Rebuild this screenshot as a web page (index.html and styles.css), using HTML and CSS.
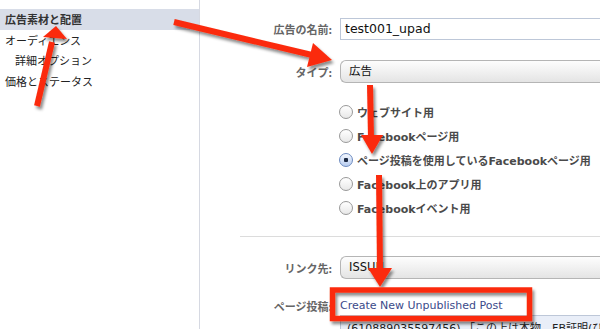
FILE: index.html
```html
<!DOCTYPE html>
<html>
<head>
    <title>広告の作成</title>
    <link rel="stylesheet" href="styles.css">
</head>
<body>
    <div class="page">
        <div class="sidebar">
            <div class="nav-item active">広告素材と配置</div>
            <div class="nav-item">オーディエンス</div>
            <div class="nav-item sub">詳細オプション</div>
            <div class="nav-item">価格とステータス</div>
        </div>
        <div class="main">
            <div class="row">
                <div class="label">広告の名前:</div>
                <div class="field"><div class="input">test001_upad</div></div>
            </div>
            <div class="row row-type">
                <div class="label">タイプ:</div>
                <div class="field"><div class="select">広告</div></div>
            </div>
            <div class="radios">
                <div class="radio-item"><span class="radio"></span>ウェブサイト用</div>
                <div class="radio-item"><span class="radio"></span>Facebookページ用</div>
                <div class="radio-item"><span class="radio checked"></span>ページ投稿を使用しているFacebookページ用</div>
                <div class="radio-item"><span class="radio"></span>Facebook上のアプリ用</div>
                <div class="radio-item"><span class="radio"></span>Facebookイベント用</div>
            </div>
            <div class="divider"></div>
            <div class="row row-link">
                <div class="label">リンク先:</div>
                <div class="field"><div class="select">ISSUN</div></div>
            </div>
            <div class="row row-post">
                <div class="label">ページ投稿:</div>
                <div class="field"><a class="post-link" href="#">Create New Unpublished Post</a></div>
            </div>
            <div class="post-box">(610889035597456) 「この上は本物。FB証明(ぴ</div>
        </div>
    </div>

    <!-- annotation layer -->
    <svg class="notes" width="600" height="329" viewBox="0 0 600 329">
        <defs>
            <filter id="shadow" x="-20%" y="-20%" width="140%" height="140%">
                <feDropShadow dx="2" dy="3" stdDeviation="1.8" flood-color="#000" flood-opacity="0.45"/>
            </filter>
        </defs>
        <g filter="url(#shadow)" fill="#fb2c0c" stroke="#fb2c0c">
            <line x1="174" y1="22" x2="312" y2="55" stroke-width="6"/>
            <polygon points="332,60 307,67 313,43" stroke="none"/>

            <line x1="37" y1="106" x2="52" y2="42" stroke-width="6"/>
            <polygon points="56,26 67,39 43,37" stroke="none"/>

            <line x1="370" y1="85" x2="371" y2="138" stroke-width="6"/>
            <polygon points="372,154 361,135 383,135" stroke="none"/>

            <line x1="379" y1="175" x2="380" y2="270" stroke-width="6"/>
            <polygon points="380,287 368,268 392,268" stroke="none"/>

            <rect x="332.5" y="290" width="197" height="28.5" fill="none" stroke-width="5.5"/>
        </g>
    </svg>
</body>
</html>
```

FILE: styles.css
```css
body {
    margin: 0;
    background: #fff;
    font-family: "DejaVu Sans", "Noto Sans CJK JP", sans-serif;
    font-size: 11px;
    color: #333;
    overflow: hidden;
}
.page {
    display: flex;
    width: 600px;
    height: 329px;
    overflow: hidden;
}
.sidebar {
    width: 199px;
    flex-shrink: 0;
    border-right: 1px solid #d6d9e2;
    padding-top: 9px;
}
.nav-item {
    height: 20.5px;
    line-height: 20px;
    padding-left: 5px;
    color: #222;
    font-family: "Noto Sans CJK JP", sans-serif;
    font-size: 11px;
}
.nav-item.active {
    background: #d8dde8;
    font-weight: bold;
    color: #333;
}
.nav-item.sub {
    padding-left: 15px;
}
.main {
    flex: 1;
    padding-top: 18px;
    min-width: 0;
}
.row {
    display: flex;
    align-items: center;
}
.label {
    width: 132px;
    flex-shrink: 0;
    text-align: right;
    padding-right: 8px;
    font-weight: bold;
    color: #666;
    font-family: "Noto Sans CJK JP", sans-serif;
    white-space: nowrap;
    overflow: hidden;
}
.field {
    flex: 1;
    min-width: 0;
}
.input {
    height: 20px;
    line-height: 20px;
    border: 1px solid #bdc7d8;
    border-right: none;
    padding-left: 4px;
    font-size: 12.5px;
    color: #111;
}
.row-type {
    margin-top: 20px;
}
.select {
    height: 21px;
    line-height: 21px;
    border: 1px solid #b5b5b5;
    border-right: none;
    border-radius: 6px 0 0 6px;
    background: linear-gradient(#fdfdfd, #f1f1f1 50%, #e4e4e4);
    padding-left: 8px;
    font-size: 11.5px;
    color: #111;
}
.radios {
    margin-top: 17px;
    padding-left: 139px;
}
.radio-item {
    display: flex;
    align-items: center;
    height: 24px;
    font-weight: bold;
    color: #4a4a4a;
    white-space: nowrap;
}
.radio {
    width: 12px;
    height: 12px;
    border: 1px solid #999;
    border-radius: 50%;
    background: linear-gradient(#fff, #e8e8e8);
    margin-right: 4px;
    flex-shrink: 0;
}
.radio.checked {
    border-color: #6d8bc0;
    background: radial-gradient(circle, #1c2a44 0 2px, transparent 2.5px), linear-gradient(#f4f8ff, #b8cdf0);
}
.divider {
    height: 1px;
    background: #dcdcdc;
    margin: 16px 0 0 40px;
}
.row-link {
    margin-top: 19px;
}
.row-post {
    margin-top: 17px;
    height: 19px;
}
.post-link {
    color: #3b4a8a;
    text-decoration: none;
    font-size: 11px;
}
.post-box {
    margin: 0 0 0 140px;
    height: 20px;
    line-height: 26px;
    border: 1px solid #bdc7d8;
    border-right: none;
    background: #e9eef8;
    padding-left: 6px;
    color: #222;
    white-space: nowrap;
    overflow: hidden;
}
.notes {
    position: absolute;
    left: 0;
    top: 0;
    pointer-events: none;
}
```
